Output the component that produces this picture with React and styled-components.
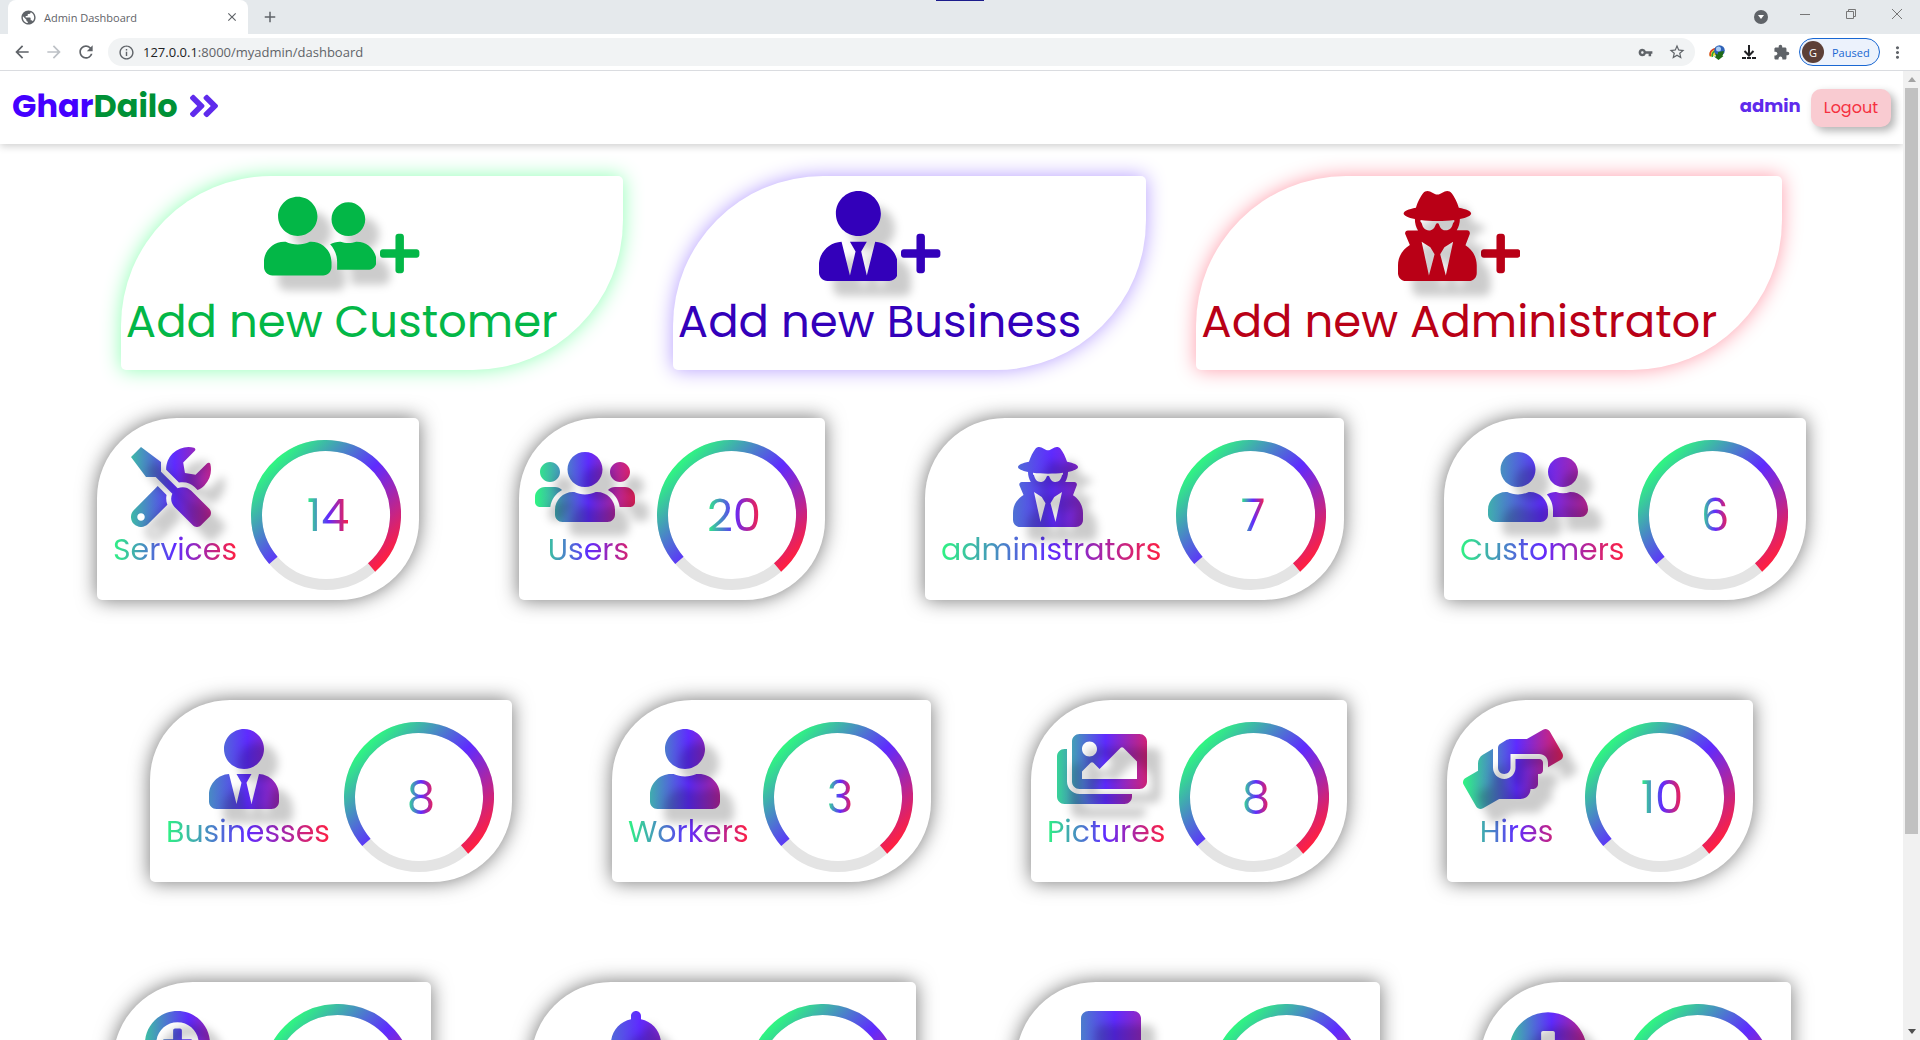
import React from "react";
import styled, { createGlobalStyle, css } from "styled-components";
import {
  FaAngleDoubleRight,
  FaArrowAltCircleDown,
  FaBell,
  FaBookmark,
  FaHandsHelping,
  FaImages,
  FaPlus,
  FaSearchPlus,
  FaTools,
  FaUser,
  FaUserFriends,
  FaUserSecret,
  FaUserTie,
  FaUsers,
} from "react-icons/fa";
import {
  MdAdd,
  MdArrowBack,
  MdArrowForward,
  MdClose,
  MdExtension,
  MdInfoOutline,
  MdMoreVert,
  MdPublic,
  MdRefresh,
  MdStarBorder,
  MdVpnKey,
} from "react-icons/md";

const GREEN = "#2ff582";
const VIOLET = "#5f2bff";
const RED = "#fe2042";
const SPECTRUM = `linear-gradient(90deg, ${GREEN}, ${VIOLET}, ${RED})`;

const UI_FONT = `"Segoe UI", "Open Sans", "Noto Sans", sans-serif`;
const PAGE_FONT = `Poppins, Inter, "Open Sans", sans-serif`;

const GlobalStyle = createGlobalStyle`
  *, *::before, *::after { box-sizing: border-box; }
  body { margin: 0; background: #fff; overflow: hidden; }
  button, input { font: inherit; }
  h1, h2, p { margin: 0; font-weight: inherit; }
`;

const Window = styled.div`
  display: flex;
  flex-direction: column;
  height: 100vh;
  position: relative;
  font-family: ${UI_FONT};
`;

const SnapHandle = styled.span`
  position: absolute;
  top: 0;
  left: 50%;
  width: 48px;
  height: 1px;
  margin-left: -24px;
  background: #1c1c8c;
`;

const plainButton = css`
  display: inline-flex;
  align-items: center;
  justify-content: center;
  padding: 0;
  border: 0;
  background: none;
  color: #5f6368;
`;

/* ---------- browser frame ---------- */

const TabStrip = styled.div`
  display: flex;
  flex: none;
  height: 34px;
  padding-left: 8px;
  background: #e5e9ec;
`;

const Tab = styled.div`
  display: flex;
  align-items: center;
  width: 240px;
  padding: 0 9px 0 12px;
  gap: 7px;
  border-radius: 8px 8px 0 0;
  background: #fff;
  color: #5f6368;
  font-size: 11px;
`;

const TabTitle = styled.span`
  flex: 1;
`;

const FrameButton = styled.button`
  ${plainButton}
  width: ${(p) => p.$width || 32}px;
  flex: none;
  color: ${(p) => p.$color || "#5f6368"};
`;

const NewTab = styled(FrameButton)`
  margin-left: 6px;
`;

const WindowControls = styled.div`
  display: flex;
  margin-left: auto;
  padding-bottom: 6px;
`;

const Toolbar = styled.div`
  display: flex;
  flex: none;
  align-items: center;
  height: 37px;
  padding: 0 6px;
  border-bottom: 1px solid #dadce0;
  background: #fff;
`;

const Omnibox = styled.form`
  display: flex;
  flex: 1;
  align-items: center;
  height: 28px;
  margin: 0 6px;
  padding: 0 2px 0 10px;
  gap: 8px;
  border-radius: 14px;
  background: #f1f3f4;
  color: #5f6368;
  font-size: 13px;
`;

const Address = styled.a`
  flex: 1;
  color: #5f6368;
  text-decoration: none;

  b {
    color: #202124;
    font-weight: 400;
  }
`;

const Profile = styled.button`
  display: flex;
  align-items: center;
  flex: none;
  width: 81px;
  height: 28px;
  margin-left: 2px;
  padding: 0 0 0 2px;
  gap: 8px;
  border: 1px solid #1967d2;
  border-radius: 14px;
  background: #ecf2fc;
  color: #1967d2;
  font-size: 11px;
`;

const Avatar = styled.span`
  display: grid;
  place-items: center;
  width: 22px;
  height: 22px;
  border-radius: 50%;
  background: #5d4037;
  color: #fff;
  font-size: 11px;
`;

/* ---------- page ---------- */

const Viewport = styled.div`
  display: flex;
  flex: 1;
  min-height: 0;
`;

const Page = styled.div`
  flex: 1;
  min-width: 0;
  overflow: hidden;
  font-family: ${PAGE_FONT};
`;

const Scrollbar = styled.div`
  display: flex;
  flex-direction: column;
  align-items: center;
  justify-content: space-between;
  flex: none;
  width: 17px;
  background: #f1f1f1;
`;

const Thumb = styled.div`
  flex: 0 1 77%;
  width: 13px;
  margin-bottom: auto;
  background: #c1c1c1;
`;

const ScrollArrow = styled.span`
  display: grid;
  place-items: center;
  width: 17px;
  height: 17px;
`;

const Header = styled.header`
  display: flex;
  align-items: center;
  justify-content: space-between;
  height: 73px;
  padding: 0 12px;
  background: #fff;
  box-shadow: 0 2px 8px rgba(0, 0, 0, 0.2);
`;

const Brand = styled.a`
  display: flex;
  align-items: center;
  gap: 8px;
  padding-bottom: 3px;
  color: #4400ff;
  font-size: 32px;
  font-weight: 700;
  text-decoration: none;

  span span {
    color: #009136;
  }

  svg {
    width: 36px;
    height: 36px;
    color: #5f2bec;
  }
`;

const Account = styled.div`
  display: flex;
  align-items: center;
  gap: 10px;
`;

const UserName = styled.span`
  padding-bottom: 4px;
  color: #5f2bec;
  font-size: 18px;
  font-weight: 700;
`;

const Logout = styled.button`
  height: 38px;
  padding: 0 13px;
  border: 0;
  border-radius: 10px;
  background: #f9cbd1;
  box-shadow: 4px 4px 8px rgba(0, 0, 0, 0.3);
  color: #f5303f;
  font-size: 16px;
`;

const Actions = styled.nav`
  display: flex;
  flex-wrap: wrap;
  justify-content: center;
  gap: 50px;
  padding-top: 32px;
`;

const ActionCard = styled.a`
  display: flex;
  flex-direction: column;
  align-items: center;
  gap: 5px;
  padding: 15px 65px 12px 5px;
  border-radius: 150px 5px;
  background: #fff;
  box-shadow: 0 0 20px ${(p) => p.$glow};
  color: ${(p) => p.$color};
  font-size: 45px;
  font-weight: 400;
  line-height: 72px;
  text-decoration: none;
  white-space: nowrap;
`;

const ActionIcons = styled.span`
  display: flex;
  align-items: flex-end;
  gap: 4px;
`;

const IconBox = styled.span`
  display: block;
  width: ${(p) => p.$ratio * p.$height}px;
  height: ${(p) => p.$height}px;

  svg {
    display: block;
    width: 100%;
    height: 100%;
  }
`;

const ActionIcon = styled(IconBox)`
  filter: drop-shadow(14px 15px 4px rgba(0, 0, 0, 0.2));
`;

const PlusIcon = styled(IconBox)`
  margin-bottom: 5px;
`;

const Stats = styled.main`
  display: flex;
  flex-wrap: wrap;
  justify-content: center;
  gap: 100px;
  padding: 48px 50px;
`;

const StatCard = styled.section`
  display: flex;
  align-items: center;
  gap: 15px;
  padding: 10px 18px 10px 16px;
  border-radius: 80px 5px;
  background: #fff;
  box-shadow: 0 0 20px rgba(0, 0, 0, 0.55);
`;

const Caption = styled.div`
  display: flex;
  flex-direction: column;
  align-items: center;
  width: ${(p) => p.$width}px;
  height: 124px;
`;

const IconStack = styled.div`
  position: relative;
  margin-right: 7px;
`;

const IconShade = styled.span`
  position: absolute;
  top: 14px;
  left: 14px;
  color: rgba(0, 0, 0, 0.2);
  filter: blur(4px);
`;

const StatLabel = styled.h2`
  width: 100%;
  background: ${SPECTRUM};
  background-clip: text;
  -webkit-background-clip: text;
  color: transparent;
  font-size: 30px;
  font-weight: 400;
  line-height: 46px;
  text-align: center;
  white-space: nowrap;
`;

const Ring = styled.div`
  display: grid;
  place-items: center;
  width: 150px;
  height: 150px;
  margin-top: 12px;

  > * {
    grid-area: 1 / 1;
  }
`;

const Count = styled.p`
  margin-left: 4px;
  padding-top: 2px;
  background: ${SPECTRUM};
  background-clip: text;
  -webkit-background-clip: text;
  color: transparent;
  font-size: 45px;
  font-weight: 400;
  line-height: 60px;
`;

const HiddenDefs = styled.svg`
  position: absolute;
  width: 0;
  height: 0;
`;

/* ratio is the icon's own width against its height */
const ACTIONS = [
  { text: "Add new Customer", Icon: FaUserFriends, ratio: 1.25, color: "#03b747", glow: "#8effb4" },
  { text: "Add new Business", Icon: FaUserTie, ratio: 0.875, color: "#3300ba", glow: "#b49cff" },
  { text: "Add new Administrator", Icon: FaUserSecret, ratio: 0.875, color: "#b90016", glow: "#ff9caa" },
];

const STATS = [
  { label: "Services", count: 14, Icon: FaTools, ratio: 1, width: 123 },
  { label: "Users", count: 20, Icon: FaUsers, ratio: 1.25, width: 107 },
  { label: "administrators", count: 7, Icon: FaUserSecret, ratio: 0.875, width: 220 },
  { label: "Customers", count: 6, Icon: FaUserFriends, ratio: 1.25, width: 163 },
  { label: "Businesses", count: 8, Icon: FaUserTie, ratio: 0.875, width: 163 },
  { label: "Workers", count: 3, Icon: FaUser, ratio: 0.875, width: 120 },
  { label: "Pictures", count: 8, Icon: FaImages, ratio: 1.125, width: 117 },
  { label: "Hires", count: 10, Icon: FaHandsHelping, ratio: 1.25, width: 107 },
  { Icon: FaSearchPlus, ratio: 1, width: 119 },
  { Icon: FaBell, ratio: 0.875, width: 186 },
  { Icon: FaBookmark, ratio: 0.75, width: 165 },
  { Icon: FaArrowAltCircleDown, ratio: 1, width: 112 },
];

const ICON_HEIGHT = 80;
const ICON_UNITS = 512 / ICON_HEIGHT;

/* Spreads one gradient over the caption's full width, seen from inside the icon. */
function CaptionGradient({ id, width, ratio }) {
  const start = (width - ratio * ICON_HEIGHT - 7) / 2;
  return (
    <HiddenDefs aria-hidden="true">
      <linearGradient
        id={id}
        gradientUnits="userSpaceOnUse"
        x1={-start * ICON_UNITS}
        x2={(width - start) * ICON_UNITS}
        y1="0"
        y2="0"
      >
        <stop offset="0" stopColor={GREEN} />
        <stop offset="0.5" stopColor={VIOLET} />
        <stop offset="1" stopColor={RED} />
      </linearGradient>
    </HiddenDefs>
  );
}

function Stat({ label, count, Icon, ratio, width, index }) {
  const fillId = `caption-${index}`;
  return (
    <StatCard>
      <Caption $width={width}>
        <CaptionGradient id={fillId} width={width} ratio={ratio} />
        <IconStack>
          <IconBox $ratio={ratio} $height={ICON_HEIGHT}>
            <Icon fill={`url(#${fillId})`} />
          </IconBox>
          <IconShade>
            <IconBox $ratio={ratio} $height={ICON_HEIGHT}>
              <Icon />
            </IconBox>
          </IconShade>
        </IconStack>
        {label && <StatLabel>{label}</StatLabel>}
      </Caption>
      <Ring>
        <svg width="150" height="150" viewBox="-75 -75 150 150" fill="none" strokeWidth="11">
          <circle r="69.5" stroke="#e4e4e4" />
          <path d="M-52.600 45.400A69.500 69.500 0 1 1 45.600 52.500" stroke="url(#ring)" />
        </svg>
        {count && <Count>{count}</Count>}
      </Ring>
    </StatCard>
  );
}

function Browser() {
  return (
    <>
      <TabStrip>
        <Tab>
          <MdPublic size={17} />
          <TabTitle>Admin Dashboard</TabTitle>
          <FrameButton $width={14} aria-label="Close tab">
            <MdClose size={14} />
          </FrameButton>
        </Tab>
        <NewTab aria-label="New tab">
          <MdAdd size={18} />
        </NewTab>
        <WindowControls>
          <FrameButton $width={42} aria-label="Search tabs">
            <svg width="14" height="20" viewBox="0 0 14 20">
              <circle cx="7" cy="13" r="7" fill="#5f6368" />
              <path d="M4 11h6l-3 4z" fill="#fff" />
            </svg>
          </FrameButton>
          <FrameButton $width={46} $color="#777" aria-label="Minimize">
            <svg width="10" height="10" stroke="currentColor">
              <path d="M0 5.5h10" />
            </svg>
          </FrameButton>
          <FrameButton $width={46} $color="#777" aria-label="Restore">
            <svg width="10" height="10" fill="none" stroke="currentColor">
              <path d="M.5 2.5h7v7h-7zM2.5 2.5v-2h7v7h-2" />
            </svg>
          </FrameButton>
          <FrameButton $width={46} $color="#777" aria-label="Close">
            <svg width="10" height="10" stroke="currentColor">
              <path d="M0 0l10 10M10 0L0 10" />
            </svg>
          </FrameButton>
        </WindowControls>
      </TabStrip>
      <Toolbar>
        <FrameButton aria-label="Back">
          <MdArrowBack size={20} />
        </FrameButton>
        <FrameButton $color="#bdc1c6" aria-label="Forward">
          <MdArrowForward size={20} />
        </FrameButton>
        <FrameButton aria-label="Reload">
          <MdRefresh size={20} />
        </FrameButton>
        <Omnibox>
          <MdInfoOutline size={17} />
          <Address href="#">
            <b>127.0.0.1</b>:8000/myadmin/dashboard
          </Address>
          <FrameButton $width={16} type="button" aria-label="Passwords">
            <MdVpnKey size={15} />
          </FrameButton>
          <FrameButton type="button" aria-label="Bookmark">
            <MdStarBorder size={18} />
          </FrameButton>
        </Omnibox>
        <FrameButton aria-label="Download manager">
          <svg width="16" height="15" viewBox="0 0 16 15">
            <path d="M1 12C-1 7 3 3 8 2.500L9 7 5 11z" fill="#e8d62c" />
            <path d="M1.500 11C0 7 3 4 7 3.500" fill="none" stroke="#d93a2b" strokeWidth="1.500" />
            <path d="M3.500 12C2.500 9 4 6.500 7 6" fill="none" stroke="#2e9b3a" strokeWidth="1.500" />
            <circle cx="10.500" cy="5.500" r="5.300" fill="#2f62b8" />
            <circle cx="9.500" cy="4" r="2.500" fill="#a9cdf5" />
            <path d="M6 8.500l3 1V7l6-1-1.500 5h1L9.500 15 5 11.500h2z" fill="#1f6b16" />
          </svg>
        </FrameButton>
        <FrameButton $color="#202124" aria-label="Downloads">
          <svg width="14" height="14" fill="none" stroke="currentColor" strokeWidth="2">
            <path d="M7 0v10M2.500 6L7 10.500 11.500 6M0 13h4M5 13h4M10 13h4" />
          </svg>
        </FrameButton>
        <FrameButton aria-label="Extensions">
          <MdExtension size={17} />
        </FrameButton>
        <Profile>
          <Avatar>G</Avatar>
          Paused
        </Profile>
        <FrameButton $width={34} aria-label="Menu">
          <MdMoreVert size={19} />
        </FrameButton>
      </Toolbar>
    </>
  );
}

export default function App() {
  return (
    <Window>
      <GlobalStyle />
      <HiddenDefs aria-hidden="true">
        <linearGradient
          id="ring"
          gradientUnits="userSpaceOnUse"
          x1="-52"
          y1="-52"
          x2="52"
          y2="52"
        >
          <stop offset="0" stopColor={GREEN} />
          <stop offset="0.5" stopColor={VIOLET} />
          <stop offset="1" stopColor={RED} />
        </linearGradient>
      </HiddenDefs>
      <Browser />
      <Viewport>
        <Page>
          <Header>
            <Brand href="#">
              <span>
                Ghar<span>Dailo</span>
              </span>
              <FaAngleDoubleRight />
            </Brand>
            <Account>
              <UserName>admin</UserName>
              <Logout>Logout</Logout>
            </Account>
          </Header>
          <Actions>
            {ACTIONS.map(({ text, Icon, ratio, color, glow }) => (
              <ActionCard key={text} href="#" $color={color} $glow={glow}>
                <ActionIcons>
                  <ActionIcon $ratio={ratio} $height={90}>
                    <Icon />
                  </ActionIcon>
                  <PlusIcon $ratio={0.875} $height={45}>
                    <FaPlus />
                  </PlusIcon>
                </ActionIcons>
                {text}
              </ActionCard>
            ))}
          </Actions>
          <Stats>
            {STATS.map((stat, index) => (
              <Stat key={index} index={index} {...stat} />
            ))}
          </Stats>
        </Page>
        <Scrollbar>
          <ScrollArrow>
            <svg width="8" height="5">
              <path d="M4 0l4 5H0z" fill="#a3a3a3" />
            </svg>
          </ScrollArrow>
          <Thumb />
          <ScrollArrow>
            <svg width="8" height="5">
              <path d="M0 0h8L4 5z" fill="#505050" />
            </svg>
          </ScrollArrow>
        </Scrollbar>
      </Viewport>
      <SnapHandle />
    </Window>
  );
}
